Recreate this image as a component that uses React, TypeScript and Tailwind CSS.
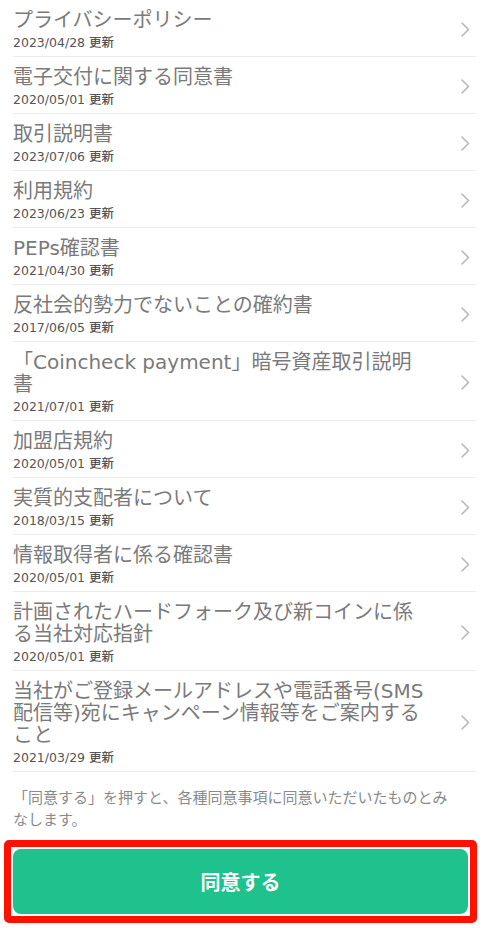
const docs = [
  { title: "プライバシーポリシー", date: "2023/04/28" },
  { title: "電子交付に関する同意書", date: "2020/05/01" },
  { title: "取引説明書", date: "2023/07/06" },
  { title: "利用規約", date: "2023/06/23" },
  { title: "PEPs確認書", date: "2021/04/30" },
  { title: "反社会的勢力でないことの確約書", date: "2017/06/05" },
  { title: "「Coincheck payment」暗号資産取引説明書", date: "2021/07/01" },
  { title: "加盟店規約", date: "2020/05/01" },
  { title: "実質的支配者について", date: "2018/03/15" },
  { title: "情報取得者に係る確認書", date: "2020/05/01" },
  { title: "計画されたハードフォーク及び新コインに係る当社対応指針", date: "2020/05/01" },
  { title: "当社がご登録メールアドレスや電話番号(SMS配信等)宛にキャンペーン情報等をご案内すること", date: "2021/03/29" },
];

export default function App() {
  return (
    <main className="min-h-screen w-[483px] bg-white font-['Noto_Sans_CJK_JP',sans-serif]">
      {/* 同意書一覧 */}
      <ul className="ml-[13px] mr-[7px]">
        {docs.map((doc, idx) => (
          <li key={idx} className="flex items-center border-b border-[#ececec] pt-[9px] pb-[6px]">
            <div className="w-[415px]">
              <p className="text-[20px] leading-[22px] text-[#7a7a7a] font-['DejaVu_Sans','Noto_Sans_CJK_JP',sans-serif]">
                {doc.title}
              </p>
              <p className="mt-[4px] text-[12.5px] leading-[15px] text-[#555555] font-['DejaVu_Sans','Noto_Sans_CJK_JP',sans-serif]">
                {doc.date} <span className="font-medium">更新</span>
              </p>
            </div>
            <svg className="ml-auto mr-[6px] w-[9px] h-[15px]" viewBox="0 0 9 15" fill="none">
              <path d="M1 1 L7.5 7.5 L1 14" stroke="#b8b8b8" strokeWidth="1.6" strokeLinecap="round" strokeLinejoin="round" />
            </svg>
          </li>
        ))}
      </ul>

      <p className="pl-[13px] pr-[30px] pt-[14px] text-[15px] leading-[22px] text-[#8a8a8a]">
        「同意する」を押すと、各種同意事項に同意いただいたものとみなします。
      </p>

      {/* 同意ボタン */}
      <div className="mt-[10px] ml-[4px] w-[473px] border-[7px] border-[#ff1100] rounded-[5px] p-[2px]">
        <button className="w-full h-[65px] rounded-[8px] bg-[#1fc28c] text-white text-[20px] font-bold flex items-center justify-center">
          同意する
        </button>
      </div>
    </main>
  );
}
